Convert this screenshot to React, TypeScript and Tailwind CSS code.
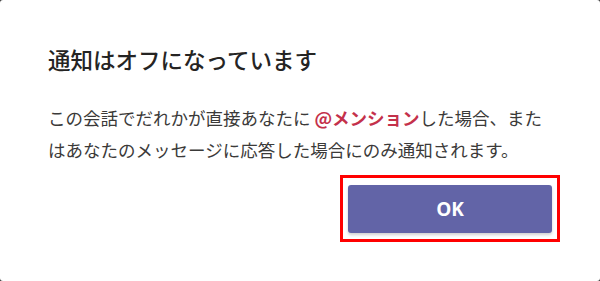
import React from "react";

export default function App() {
  return (
    <div className="w-[600px] h-[281px] bg-[#3a3a3a]">
      <div
        className="w-full h-full bg-white rounded-[3px] pl-[48px] pr-[48px] pt-[44px] pb-[48px] flex flex-col"
        style={{ fontFamily: '"Noto Sans CJK JP", "Noto Sans", sans-serif' }}
      >
        <h1 className="text-[22.5px] leading-[30px] font-medium text-[#252423] m-0">
          通知はオフになっています
        </h1>
        <p className="mt-[28px] text-[17.5px] leading-[32px] text-[#3b3a39] whitespace-nowrap">
          この会話でだれかが直接あなたに{" "}
          <span className="font-bold text-[#c4314b]">@メンション</span>
          した場合、また
          <br />
          はあなたのメッセージに応答した場合にのみ通知されます。
        </p>
        <div className="mt-auto flex justify-end">
          <div className="relative">
            <button
              className="w-[204px] h-[48px] rounded-[3px] bg-[#6264a7] text-white text-[19px] font-bold shadow-[0_2px_3px_rgba(0,0,0,0.18)]"
              style={{ fontFamily: '"Open Sans", "Noto Sans", sans-serif' }}
            >
              OK
            </button>
            <div className="absolute left-[-8px] top-[-10px] right-[-8px] bottom-[-9px] border-[3px] border-[#ff0000] pointer-events-none" />
          </div>
        </div>
      </div>
    </div>
  );
}
